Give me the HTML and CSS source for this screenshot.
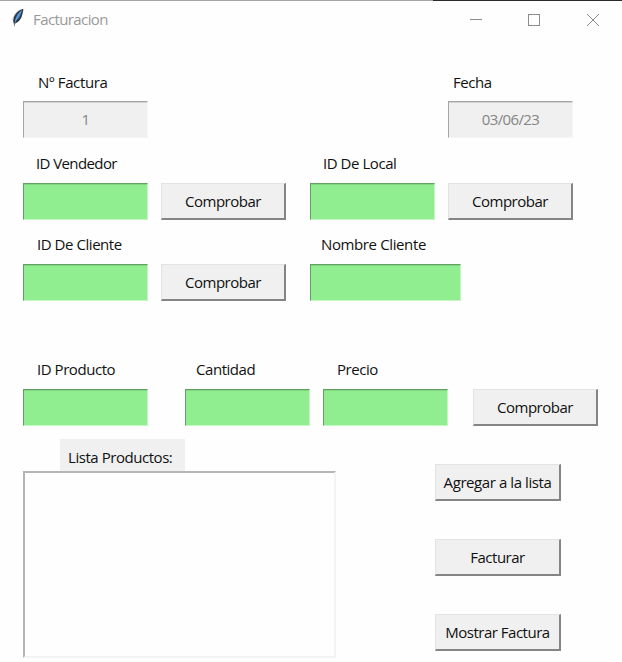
FILE: index.html
```html
<!DOCTYPE html>
<html lang="es">
<head>
<meta charset="utf-8">
<title>Facturacion</title>
<link rel="stylesheet" href="styles.css">
</head>
<body>
<header class="titlebar">
  <svg class="feather" width="14" height="20" viewBox="0 0 14 20">
    <path d="M12.300 1C9 1.200 4.500 4.500 2.800 9c-.8 2.200-.8 4.500-.2 5.800l.8 4 .8-3.300C8 14 10.500 10.500 11.300 6.500 11.700 4.600 12.500 2.500 12.300 1Z" fill="#283440"/>
    <path d="M10.800 2.500C7.800 4 4.500 8 3.900 13.500c3.400-1.800 5.700-5.500 6.500-9Z" fill="#4482c8"/>
    <path d="M11 2.200C7.500 6 5 10.500 3.300 17" fill="none" stroke="#8fb9e2" stroke-width=".6"/>
    <path d="M7.500 2.800C4.500 5 2.200 8.500 1.700 12" fill="none" stroke="#bbb" stroke-width=".9"/>
  </svg>
  <h1 class="title">Facturacion</h1>
  <svg class="controls" width="130" height="14" viewBox="0 0 130 14" fill="none" stroke="#8c8c8c">
    <path d="M0 6.500h12"/>
    <rect x="58.500" y="1.500" width="11" height="11"/>
    <path d="M117 1l12 12M129 1l-12 12"/>
  </svg>
</header>
<main>
  <section class="row first">
    <div class="cell"><label class="label factura">Nº Factura</label><div class="entry off">1</div></div>
    <div class="cell date"><label class="label fecha">Fecha</label><div class="entry off">03/06/23</div></div>
  </section>
  <section class="row">
    <div class="cell"><label class="label vendedor">ID Vendedor</label><div class="entry"></div></div>
    <button class="btn">Comprobar</button>
    <div class="cell third"><label class="label local">ID De Local</label><div class="entry"></div></div>
    <button class="btn">Comprobar</button>
  </section>
  <section class="row">
    <div class="cell"><label class="label">ID De Cliente</label><div class="entry"></div></div>
    <button class="btn">Comprobar</button>
    <div class="cell third wide"><label class="label nombre">Nombre Cliente</label><div class="entry"></div></div>
  </section>
  <section class="row product">
    <div class="cell"><label class="label">ID Producto</label><div class="entry"></div></div>
    <div class="cell qty"><label class="label cantidad">Cantidad</label><div class="entry"></div></div>
    <div class="cell price"><label class="label">Precio</label><div class="entry"></div></div>
    <button class="btn check">Comprobar</button>
  </section>
  <section class="bottom">
    <div class="list">
      <div class="caption">Lista Productos:</div>
      <div class="listbox"></div>
    </div>
    <div class="actions">
      <button class="btn add">Agregar a la lista</button>
      <button class="btn">Facturar</button>
      <button class="btn">Mostrar Factura</button>
    </div>
  </section>
</main>
</body>
</html>
```
FILE: styles.css
```css
* { box-sizing: border-box; }
body {
  margin: 0;
  width: 622px;
  height: 662px;
  overflow: hidden;
  background: #fefefe;
  color: #111;
  font: 15px/20px "Open Sans", "Noto Sans", sans-serif;
  letter-spacing: -.45px;
}
.titlebar {
  display: flex;
  align-items: flex-start;
  height: 72px;
  padding: 8px 22px 0 11px;
  background: linear-gradient(90deg, #a5a5a5 433px, #2c2a2d 433px) top / 100% 1px no-repeat;
}
.title {
  margin: 1px auto 0 8px;
  color: #999;
  font-size: 15px;
  font-weight: 400;
  line-height: 20px;
  letter-spacing: -.6px;
}
.controls { margin-top: 5px; }
.row {
  display: flex;
  align-items: flex-end;
  height: 66px;
  margin-bottom: 15px;
  padding-left: 23px;
}
.first { margin-bottom: 16px; }
.product { margin-top: 59px; margin-bottom: 13px; }
.cell { width: 125px; }
.date { margin-left: 300px; }
.third { margin-left: 24px; }
.wide { width: 151px; }
.qty { margin-left: 37px; }
.price { margin-left: 13px; }
.label {
  display: block;
  height: 29px;
  padding-left: 14px;
  line-height: 18px;
  white-space: nowrap;
}
.factura { padding-left: 15px; letter-spacing: -.35px; line-height: 20px; }
.fecha { padding-left: 5px; line-height: 20px; }
.vendedor { padding-left: 13px; letter-spacing: -.6px; }
.local { padding-left: 13px; }
.nombre { padding-left: 11px; letter-spacing: -.38px; }
.cantidad { padding-left: 11px; }
.entry {
  height: 37px;
  background: #90ee90;
  border: 1px solid #c4f7c4;
  border-top-color: #62a062;
  border-left-color: #62a062;
  box-shadow: inset 0 1px #82d682;
}
.entry.off {
  color: #858585;
  background: #f0f0f0;
  border-color: #a5a5a5 #f6f6f6 #f6f6f6 #a5a5a5;
  box-shadow: inset 0 1px #d2d2d2;
  text-align: center;
  line-height: 35px;
  letter-spacing: -.65px;
}
.btn {
  width: 125px;
  height: 37px;
  margin: 0 0 0 13px;
  padding: 0 0 1px;
  background: #f0f0f0;
  border: 1px solid #e3e3e3;
  border-right: 2px solid #858585;
  border-bottom: 2px solid #858585;
  color: #111;
  font: inherit;
  white-space: nowrap;
  letter-spacing: -.5px;
}
.check { margin-left: 25px; }
.bottom { display: flex; }
.list { width: 313px; margin-left: 23px; }
.caption {
  width: 125px;
  height: 32px;
  margin-left: 37px;
  padding: 8px 0 0 8px;
  background: #f0f0f0;
  white-space: nowrap;
}
.listbox {
  height: 187px;
  border: 2px solid #f3f3f3;
  border-top-color: #b5b5b5;
  border-left-color: #b5b5b5;
}
.actions {
  display: flex;
  flex-direction: column;
  gap: 38px;
  margin: 25px 0 0 99px;
}
.actions .btn { margin: 0; width: 126px; }
.actions .add { letter-spacing: -.42px; }
```
